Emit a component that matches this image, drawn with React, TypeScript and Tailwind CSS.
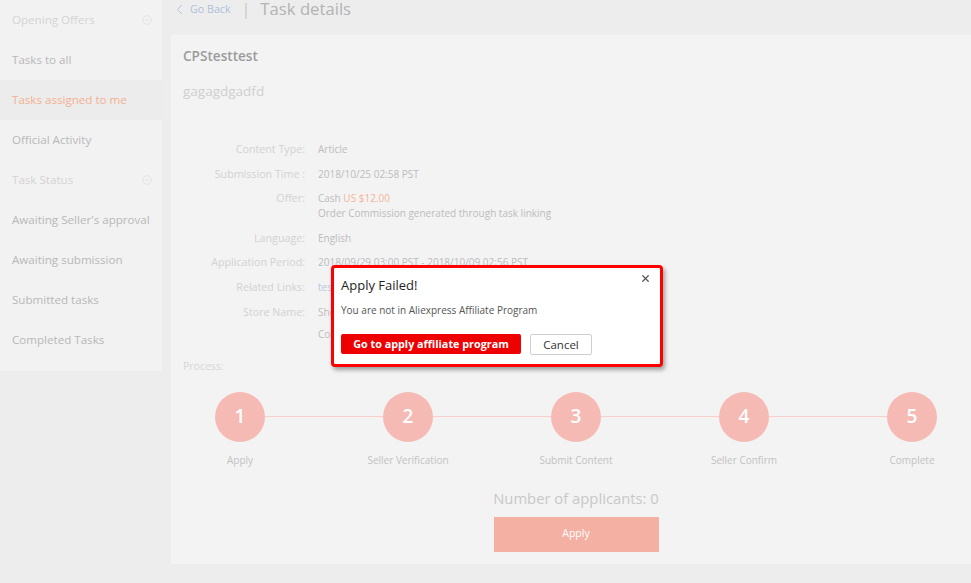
import { ChevronLeft, X } from "lucide-react";

const font = { fontFamily: '"Open Sans", "Noto Sans", sans-serif' };

const menu = [
  { name: "Opening Offers", header: true },
  { name: "Tasks to all" },
  { name: "Tasks assigned to me", active: true },
  { name: "Official Activity" },
  { name: "Task Status", header: true },
  { name: "Awaiting Seller's approval" },
  { name: "Awaiting submission" },
  { name: "Submitted tasks" },
  { name: "Completed Tasks" },
];

const steps = [
  { n: 1, label: "Apply" },
  { n: 2, label: "Seller Verification" },
  { n: 3, label: "Submit Content" },
  { n: 4, label: "Seller Confirm" },
  { n: 5, label: "Complete" },
];

function CollapseIcon() {
  return (
    <svg width="10" height="10" viewBox="0 0 10 10" className="text-[#e0e0e0]">
      <circle cx="5" cy="5" r="4.3" fill="none" stroke="currentColor" strokeWidth="0.9" />
      <line x1="2.8" y1="5" x2="7.2" y2="5" stroke="currentColor" strokeWidth="0.9" />
    </svg>
  );
}

function SideBar() {
  return (
    <div className="w-[162px] shrink-0 self-start bg-[#f2f2f2] pb-[11px]">
      {menu.map((m) => (
        <div
          key={m.name}
          className={`h-10 flex items-center justify-between pl-3 pr-[10px] text-[11.6px] ${
            m.header
              ? "text-[#d4d4d4]"
              : m.active
              ? "bg-[#ececec] text-[#f4b092]"
              : "text-[#b8b8b8]"
          }`}
        >
          <span className="whitespace-nowrap">{m.name}</span>
          {m.header && <CollapseIcon />}
        </div>
      ))}
    </div>
  );
}

function Row({ label, children }: { label: string; children: React.ReactNode }) {
  return (
    <>
      <div className="text-right text-[10.7px] text-[#d2d2d2] whitespace-nowrap">{label}</div>
      <div className="text-[10px] text-[#bcbcbc] whitespace-nowrap">{children}</div>
    </>
  );
}

function Details() {
  return (
    <div className="grid grid-cols-[134px_1fr] gap-x-[13px] gap-y-[9.6px] leading-[15px] mt-[41px]">
      <Row label="Content Type:">Article</Row>
      <Row label="Submission Time :">2018/10/25 02:58 PST</Row>
      <Row label="Offer:">
        <div>
          Cash <span className="text-[#f5b499]">US $12.00</span>
        </div>
        <div>Order Commission generated through task linking</div>
      </Row>
      <Row label="Language:">English</Row>
      <Row label="Application Period:">2018/09/29 03:00 PST - 2018/10/09 02:56 PST</Row>
      <Row label="Related Links:">
        <span className="text-[#b9c6dc]">test link</span>
      </Row>
      <Row label="Store Name:">
        <div>Shop1234567</div>
        <div className="mt-[7px]">Contact the seller</div>
      </Row>
    </div>
  );
}

function Process() {
  return (
    <div className="mt-[17px]">
      <div className="pl-3 text-[10.5px] leading-[15px] text-[#d6d6d6]">Process:</div>
      <div className="ml-[44px] mr-[34px] mt-[18px] flex items-center">
        {steps.map((s, i) => (
          <div key={s.n} className={`flex items-center ${i < steps.length - 1 ? "flex-1" : ""}`}>
            <div className="w-[50px] h-[50px] rounded-full bg-[#f6bab5] flex items-center justify-center text-white text-[19px] font-semibold shrink-0">
              {s.n}
            </div>
            {i < steps.length - 1 && <div className="flex-1 h-px bg-[#f8cfcb]" />}
          </div>
        ))}
      </div>
      <div className="ml-[44px] mr-[34px] mt-[11px] flex">
        {steps.map((s, i) => (
          <div key={s.n} className={`flex ${i < steps.length - 1 ? "flex-1" : ""}`}>
            <div className="w-[50px] flex justify-center text-[10px] leading-[15px] text-[#c2c2c2] whitespace-nowrap">
              {s.label}
            </div>
          </div>
        ))}
      </div>
    </div>
  );
}

function Modal() {
  return (
    <div className="absolute left-[331px] top-[265px] w-[332px] h-[102px] border-[3px] border-[#ff0000] rounded-[4px] bg-white shadow-[2px_3px_4px_rgba(0,0,0,0.35)] pl-[7px] pr-[10px] pt-[8px]">
      <button className="absolute right-[9px] top-[5px] text-[#555]">
        <X size={11} strokeWidth={2.6} />
      </button>
      <div className="text-[13px] leading-[18px] text-[#1e1e1e]">Apply Failed!</div>
      <div className="mt-[9px] text-[10px] leading-[15px] text-[#555]">
        You are not in Aliexpress Affiliate Program
      </div>
      <div className="mt-[16px] flex gap-[9px]">
        <button className="w-[180px] h-[20px] rounded-[2px] bg-[#ee0000] text-white text-[10.8px] font-bold leading-[20px]">
          Go to apply affiliate program
        </button>
        <button className="w-[62px] h-[21px] rounded-[2px] border border-[#cfcfcf] bg-white text-[#333] text-[11.5px] leading-[19px]">
          Cancel
        </button>
      </div>
    </div>
  );
}

export default function App() {
  return (
    <div style={font} className="relative w-[971px] h-[583px] overflow-hidden bg-[#ededed] flex">
      <SideBar />
      <div className="flex-1 ml-[9px] flex flex-col">
        <div className="h-[35px] pb-[17px] flex items-center">
          <div className="flex items-center text-[#aebfd9] text-[10.7px]">
            <ChevronLeft size={17} strokeWidth={1.3} />
            <span className="ml-[2px]">Go Back</span>
          </div>
          <span className="ml-[11px] text-[#c8c8c8] text-[16px]">|</span>
          <span className="ml-[10px] text-[#b3b3b3] text-[16.7px]">Task details</span>
        </div>
        <div className="bg-[#f3f3f3] h-[529px] pt-[12px]">
          <div className="pl-3 text-[13.6px] leading-[18px] font-semibold text-[#9b9b9b]">CPStesttest</div>
          <div className="pl-3 mt-[16px] text-[13.5px] leading-[20px] text-[#cfcfcf]">gagagdgadfd</div>
          <Details />
          <Process />
          <div className="mt-[19px] pl-[10px] flex flex-col items-center">
            <div className="text-[14.8px] leading-[22px] text-[#c8c8c8]">Number of applicants: 0</div>
            <button className="mt-[8px] w-[165px] h-[35px] bg-[#f4b0a3] text-white text-[10.5px]">Apply</button>
          </div>
        </div>
      </div>
      <Modal />
    </div>
  );
}
